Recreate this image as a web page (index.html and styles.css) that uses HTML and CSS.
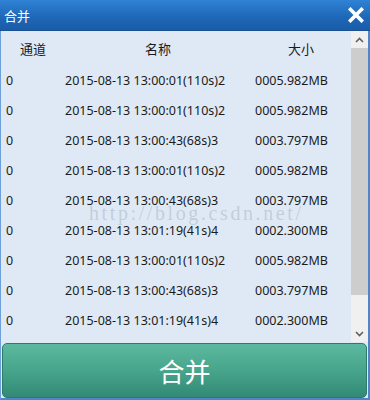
FILE: index.html
```html
<!DOCTYPE html>
<html>
<head>
<meta charset="utf-8">
<link rel="stylesheet" href="styles.css">
</head>
<body>
<div class="window">
  <div class="titlebar">
    <span class="title">合并</span>
    <svg class="close" width="16" height="16" viewBox="0 0 16 16"><path d="M2.5 2.5 L13.5 13.5 M13.5 2.5 L2.5 13.5" stroke="#fff" stroke-width="3.6" stroke-linecap="square"/></svg>
  </div>
  <div class="content">
    <div class="list">
      <div class="row head">
        <div class="c1">通道</div><div class="c2">名称</div><div class="c3">大小</div>
      </div>
      <div class="row"><div class="c1">0</div><div class="c2">2015-08-13 13:00:01(110s)2</div><div class="c3">0005.982MB</div></div>
      <div class="row"><div class="c1">0</div><div class="c2">2015-08-13 13:00:01(110s)2</div><div class="c3">0005.982MB</div></div>
      <div class="row"><div class="c1">0</div><div class="c2">2015-08-13 13:00:43(68s)3</div><div class="c3">0003.797MB</div></div>
      <div class="row"><div class="c1">0</div><div class="c2">2015-08-13 13:00:01(110s)2</div><div class="c3">0005.982MB</div></div>
      <div class="row"><div class="c1">0</div><div class="c2">2015-08-13 13:00:43(68s)3</div><div class="c3">0003.797MB</div></div>
      <div class="row"><div class="c1">0</div><div class="c2">2015-08-13 13:01:19(41s)4</div><div class="c3">0002.300MB</div></div>
      <div class="row"><div class="c1">0</div><div class="c2">2015-08-13 13:00:01(110s)2</div><div class="c3">0005.982MB</div></div>
      <div class="row"><div class="c1">0</div><div class="c2">2015-08-13 13:00:43(68s)3</div><div class="c3">0003.797MB</div></div>
      <div class="row"><div class="c1">0</div><div class="c2">2015-08-13 13:01:19(41s)4</div><div class="c3">0002.300MB</div></div>
      <div class="watermark">http://blog.csdn.net/</div>
    </div>
    <div class="scrollbar">
      <div class="arrow"><svg width="9" height="6" viewBox="0 0 9 6"><path d="M1 5 L4.5 1.5 L8 5" fill="none" stroke="#606060" stroke-width="1.6"/></svg></div>
      <div class="thumb"></div>
      <div class="track"></div>
      <div class="arrow"><svg width="9" height="6" viewBox="0 0 9 6"><path d="M1 1 L4.5 4.5 L8 1" fill="none" stroke="#606060" stroke-width="1.6"/></svg></div>
    </div>
  </div>
  <div class="btnwrap">
    <div class="button">合并</div>
  </div>
</div>
</body>
</html>
```

FILE: styles.css
```css
html, body {
  margin: 0;
  padding: 0;
}
body {
  width: 370px;
  height: 400px;
  overflow: hidden;
  font-family: "Noto Sans", "Noto Sans CJK SC", sans-serif;
  color: #1b1b1b;
}
.window {
  box-sizing: border-box;
  width: 370px;
  height: 400px;
  display: flex;
  flex-direction: column;
  background: #dfe9f6;
  border-left: 1px solid #6d9fd8;
  border-right: 2px solid #4f86c9;
  border-bottom: 2px solid #4f86c9;
}
.titlebar {
  height: 30px;
  margin: 0 -2px 0 -1px;
  flex: none;
  display: flex;
  align-items: center;
  justify-content: space-between;
  padding: 0 6px 0 4px;
  background: linear-gradient(#2f82d4, #1e66b6 60%, #1a5ca8);
  border-bottom: 1px solid #1a4f90;
}
.title {
  color: #fff;
  font-family: "Noto Sans CJK SC", sans-serif;
  font-size: 13px;
}
.close {
  display: block;
}
.content {
  flex: 1;
  display: flex;
  min-height: 0;
}
.list {
  flex: 1;
  position: relative;
  display: flex;
  flex-direction: column;
}
.row {
  display: grid;
  grid-template-columns: 64px 186px 1fr;
  align-items: center;
  height: 30.1px;
  font-size: 12.5px;
}
.row .c1 { padding-left: 5px; }
.row .c3 { padding-left: 4px; }
.row.head {
  height: 34px;
  font-family: "Noto Sans CJK SC", sans-serif;
  font-size: 13px;
  text-align: center;
}
.row.head .c1, .row.head .c3 { padding-left: 0; }
.watermark {
  position: absolute;
  left: 88px;
  top: 175.5px;
  line-height: 12px;
  font-family: "Liberation Serif", serif;
  font-size: 20px;
  letter-spacing: 2.6px;
  color: rgba(140, 150, 165, 0.35);
  pointer-events: none;
}
.scrollbar {
  width: 17px;
  flex: none;
  display: flex;
  flex-direction: column;
  background: #f0f0f0;
}
.arrow {
  height: 17px;
  flex: none;
  display: flex;
  align-items: center;
  justify-content: center;
}
.thumb {
  height: 247px;
  flex: none;
  background: #cdcdcd;
}
.track {
  flex: 1;
}
.btnwrap {
  flex: none;
  padding: 1px 1px 0 1px;
}
.button {
  height: 55px;
  box-sizing: border-box;
  border: 1px solid #2e7b69;
  border-radius: 5px;
  background: linear-gradient(#5cb9a0, #47a58c 50%, #328a74);
  color: #fff;
  font-family: "Noto Sans CJK SC", sans-serif;
  font-size: 26px;
  display: flex;
  align-items: center;
  justify-content: center;
}
```
